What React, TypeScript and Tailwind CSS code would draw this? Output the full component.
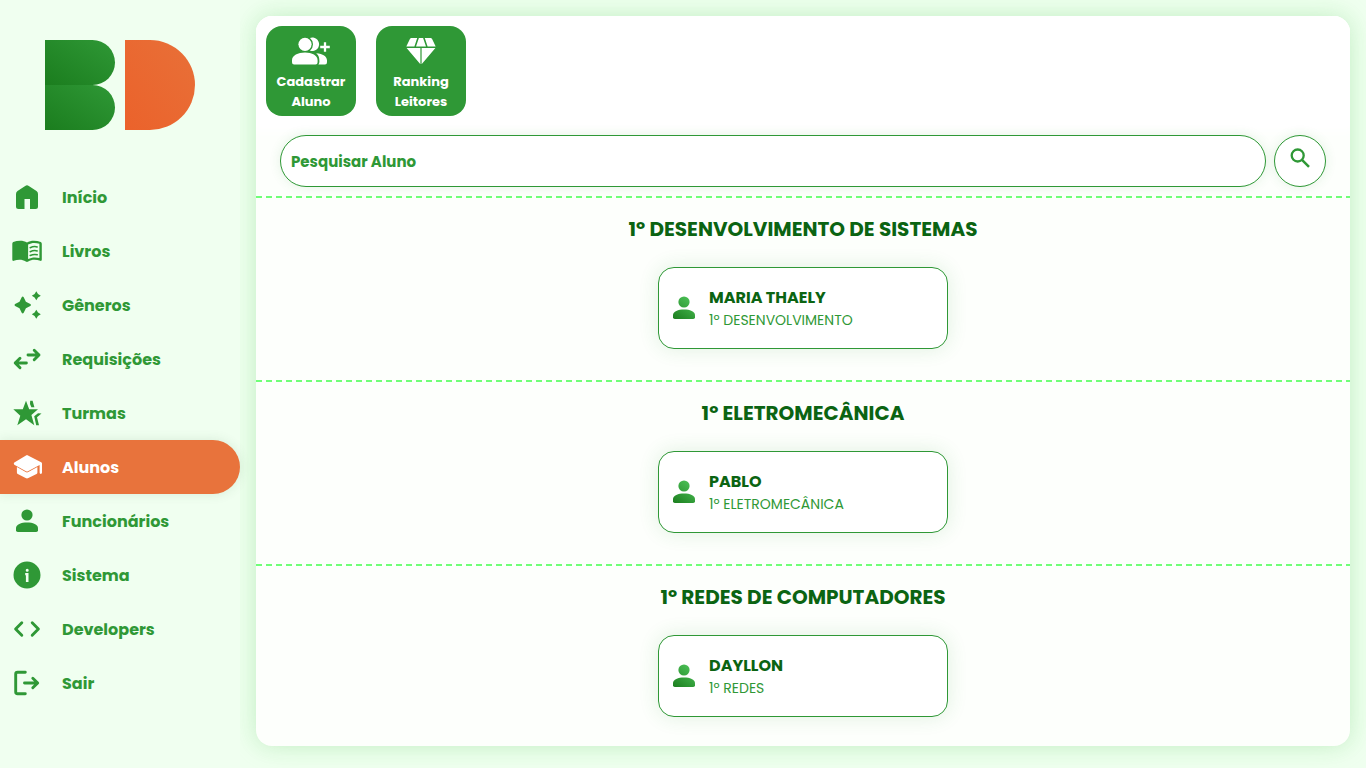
import type { ReactNode } from "react";

const Svg = ({ children, className = "size-[30px]", box = "0 0 30 30" }: { children: ReactNode; className?: string; box?: string }) => (
  <svg viewBox={box} className={"shrink-0 " + className} fill="currentColor" aria-hidden="true">
    {children}
  </svg>
);

const line = { fill: "none", stroke: "currentColor", strokeWidth: 2.9, strokeLinecap: "round", strokeLinejoin: "round" } as const;

const HomeIcon = () => (
  <Svg>
    <path d="M13.2 3.9Q15 2.7 16.8 3.9L24.5 9.1Q26 10.2 26 12V24.5Q26 27 23.5 27H18V17H12.5V27H6.5Q4 27 4 24.5V12Q4 10.2 5.5 9.1Z" />
  </Svg>
);

const BookIcon = () => (
  <Svg>
    <path
      fillRule="evenodd"
      d="M15 6.4C11.5 4.2 5.8 4.2 1.2 6Q.3 6.5 .3 7.8V23.6Q.3 25.3 1.7 24.8C6 23.4 10.5 23.4 13.8 25.5Q15 26.3 16.2 25.5C19.5 23.4 24 23.4 28.3 24.8Q29.8 25.3 29.8 23.6V7.8Q29.8 6.5 28.8 6C24.2 4.2 18.5 4.2 15 6.4ZM16.1 8.6C19.4 6.6 23.6 6.5 27.4 7.8V22C23.6 21 19.5 21.2 16.1 23Z"
    />
    <path d="M18.2 11.7Q21.8 10 25.2 10.9M18.2 15.7Q21.8 14 25.2 14.9M18.2 19.5Q21.8 17.8 25.2 18.7" {...line} strokeWidth={1.5} />
  </Svg>
);

const SparklesIcon = () => (
  <Svg>
    <path d="M9.7 7.3Q10.7 5.7 11.7 7.3L13.9 11.7L18.3 13.9Q19.8 15 18.3 16.1L13.9 18.3L11.7 22.7Q10.7 24.3 9.7 22.7L7.5 18.3L3.1 16.1Q1.6 15 3.1 13.9L7.5 11.7Z" />
    <path d="M24.3 1.2L26 4L28.8 5.7L26 7.4L24.3 10.2L22.6 7.4L19.8 5.7L22.6 4ZM24.3 19.8L26 22.6L28.8 24.3L26 26L24.3 28.8L22.6 26L19.8 24.3L22.6 22.6Z" />
  </Svg>
);

const SwapIcon = () => (
  <Svg>
    <path d="M16 11H27M22.2 6.2L27 11L22.2 15.8M14.4 19H3.2M8 14.2L3.2 19L8 23.8" {...line} />
  </Svg>
);

const StarIcon = () => (
  <Svg>
    <path d="M14 2.7L17.2 11.3H26L19.4 17L22.3 27.3L14 21.3L5.3 27.3L8.3 17.7L1.3 11.3H10.8Z" />
    <path d="M18.2 2.7H20.6L22.4 9.3H19.4L18 6ZM29.5 15.4L25 19.2L27 27.3H24.2L22.2 18.3L26 15.2Z" />
  </Svg>
);

const CapIcon = () => (
  <Svg>
    <path d="M14 3.4Q15 2.8 16 3.4L29.2 10.2Q30 10.7 30 11.6V20.6Q30 22 28.8 22T27.6 20.6V13L16 19.2Q15 19.7 14 19.2L2.3 12.7Q1.2 11.6 2.3 10.5Z" />
    <path d="M4.9 15.1L13.7 20.1Q15 20.8 16.3 20.1L25.4 15.1V20.4Q25.4 21.4 24.5 22L16.4 26.1Q15 26.7 13.6 26.1L5.8 22Q4.9 21.4 4.9 20.4Z" />
  </Svg>
);

const PersonShape = () => (
  <>
    <circle cx="15" cy="9" r="5.6" />
    <path d="M4 22.3C4 18.5 9.2 16.6 15 16.6S26 18.5 26 22.3V24.2Q26 26 24.2 26H5.8Q4 26 4 24.2Z" />
  </>
);

const InfoIcon = () => (
  <Svg>
    <path fillRule="evenodd" d="M15 1.5A13.5 13.5 0 1 1 15 28.5A13.5 13.5 0 0 1 15 1.5ZM15.2 8.7A1.5 1.5 0 1 0 15.2 11.7A1.5 1.5 0 0 0 15.2 8.7ZM13.2 13V15.2H13.9V22H16.5V13Z" />
  </Svg>
);

const CodeIcon = () => (
  <Svg>
    <path d="M9.8 8.8L3.6 15L9.8 21.2M20.2 8.8L26.4 15L20.2 21.2" {...line} />
  </Svg>
);

const ExitIcon = () => (
  <Svg>
    <path d="M13.3 4.3H5.5Q3.7 4.3 3.7 6V24Q3.7 25.7 5.5 25.7H13.3M12.5 15H25.5M20.8 10.2L25.7 15L20.8 19.8" {...line} />
  </Svg>
);

const AddPeopleIcon = () => (
  <Svg className="h-[30px] w-10" box="0 0 40 30">
    <circle cx="14" cy="8.3" r="6.6" />
    <path d="M1 24.3C1 19.5 7 16.6 14 16.6S26.6 19.5 26.6 24.3V26.2Q26.6 28.5 24.5 28.5H3.1Q1 28.5 1 26.2ZM19 1.9A6.8 6.8 0 1 1 19 14.7Q22 12.2 22 8.3T19 1.9ZM25.2 17.3C32 18 36 20.4 36 24.5V26.2Q36 28.5 34 28.5H27.4Q28.4 27.4 28.4 25.8C28.4 21.8 28 19.8 25.2 17.3Z" />
    <path d="M34 6.3V15.7M29.2 11H38.8" {...line} strokeLinecap="butt" strokeWidth={2.3} />
  </Svg>
);

const DiamondIcon = () => (
  <Svg>
    <path d="M5.5 2H11.2L8.4 10.5H.3L3.9 3Q4.4 2 5.5 2ZM12.9 2H17.1L20 10.5H10ZM18.8 2H24.5Q25.6 2 26.1 3L29.7 10.5H21.6ZM.6 12H14.4V28.3ZM15.6 12H29.4L15.6 28.3Z" />
  </Svg>
);

const menu = [
  { label: "Início", icon: <HomeIcon /> },
  { label: "Livros", icon: <BookIcon /> },
  { label: "Gêneros", icon: <SparklesIcon /> },
  { label: "Requisições", icon: <SwapIcon /> },
  { label: "Turmas", icon: <StarIcon /> },
  { label: "Alunos", icon: <CapIcon />, active: true },
  { label: "Funcionários", icon: <Svg><PersonShape /></Svg> },
  { label: "Sistema", icon: <InfoIcon /> },
  { label: "Developers", icon: <CodeIcon /> },
  { label: "Sair", icon: <ExitIcon /> },
];

const classes = [
  { title: "1º DESENVOLVIMENTO DE SISTEMAS", student: "MARIA THAELY", course: "1º DESENVOLVIMENTO" },
  { title: "1º ELETROMECÂNICA", student: "PABLO", course: "1º ELETROMECÂNICA" },
  { title: "1º REDES DE COMPUTADORES", student: "DAYLLON", course: "1º REDES" },
];

const Logo = () => (
  <svg viewBox="0 0 150 90" className="h-[90px] w-[150px]" role="img" aria-label="BD">
    <defs>
      <linearGradient id="logo-green" x1="0" y1="1" x2="1" y2="0">
        <stop stopColor="#1b7d1e" />
        <stop offset="1" stopColor="#2f9836" />
      </linearGradient>
      <linearGradient id="logo-orange" x1="0" y1="1" x2="1" y2="0">
        <stop stopColor="#eb622b" />
        <stop offset="1" stopColor="#e87038" />
      </linearGradient>
    </defs>
    <path d="M0 0H47.5A22.5 22.5 0 0 1 47.5 45H0Z" fill="url(#logo-green)" />
    <path d="M0 45H47.5A22.5 22.5 0 0 1 47.5 90H0Z" fill="url(#logo-green)" />
    <path d="M80 0H105A45 45 0 0 1 105 90H80Z" fill="url(#logo-orange)" />
  </svg>
);

const ActionButton = ({ icon, top, bottom }: { icon: ReactNode; top: string; bottom: string }) => (
  <button type="button" className="flex size-[90px] flex-col items-center rounded-2xl bg-[#2f9836] pt-2.5 text-[13px] leading-5 font-bold text-white">
    {icon}
    <span className="mt-1.5">{top}</span>
    <span>{bottom}</span>
  </button>
);

export default function App() {
  return (
    <div className="flex min-h-screen bg-[#f0fff0] font-['Poppins','Inter',sans-serif] text-[#2f9836]">
      <aside className="w-60 shrink-0">
        <a href="#inicio" className="flex justify-center pt-10 pb-10">
          <Logo />
        </a>
        <nav>
          {menu.map(({ label, icon, active }) => (
            <a
              key={label}
              href="#menu"
              aria-current={active ? "page" : undefined}
              className={
                "flex h-[54px] items-center gap-5 rounded-r-full pl-3 text-base leading-6 font-bold " +
                (active ? "bg-[#e8733c] text-white shadow-[0_0_12px_rgba(47,100,54,0.12)]" : "")
              }
            >
              {icon}
              <span className="pt-0.5">{label}</span>
            </a>
          ))}
        </nav>
      </aside>

      <div className="flex min-w-0 flex-1 overflow-hidden pt-4 pr-4 pb-[22px] pl-4">
        <main className="flex min-w-0 flex-1 flex-col overflow-hidden rounded-2xl bg-[#fdfffc] shadow-[0_0_20px_rgba(47,152,54,0.16),0_0_40px_rgba(170,255,170,0.25)]">
          <header>
            <div className="flex gap-5 bg-white p-2.5 shadow-[0_0_12px_6px_#fff]">
              <ActionButton icon={<AddPeopleIcon />} top="Cadastrar" bottom="Aluno" />
              <ActionButton icon={<DiamondIcon />} top="Ranking" bottom="Leitores" />
            </div>
            <form className="flex gap-2 px-6 pt-[9px] pb-[9px]" onSubmit={(event) => event.preventDefault()}>
              <input
                type="search"
                aria-label="Pesquisar Aluno"
                placeholder="Pesquisar Aluno"
                className="h-[52px] min-w-0 flex-1 rounded-full border border-[#2f9836] bg-white px-2.5 text-[15px] font-bold shadow-[0_0_12px_rgba(47,152,54,0.12)] outline-none placeholder:text-[#2f9836] placeholder:opacity-100"
              />
              <button
                type="submit"
                aria-label="Pesquisar"
                className="flex size-[52px] items-start justify-center rounded-full border border-[#2f9836] bg-white pt-2.5 shadow-[0_0_12px_rgba(47,152,54,0.12)]"
              >
                <Svg className="size-6" box="0 0 24 24">
                  <circle cx="9.7" cy="9.5" r="6" {...line} strokeWidth={2.3} />
                  <path d="M14 13.8L21 20.8" {...line} strokeWidth={2.5} strokeLinecap="butt" />
                </Svg>
              </button>
            </form>
          </header>

          {classes.map(({ title, student, course }) => (
            <section key={title} className="flex flex-col items-center pb-[31px] last:pb-7">
              <svg className="h-0.5 w-full" aria-hidden="true">
                <line x1="0" y1="1" x2="100%" y2="1" stroke="#70ff78" strokeWidth="2" strokeDasharray="6 4" />
              </svg>
              <h2 className="pt-4 text-[20px] leading-[30px] font-bold text-[#0b6412]">{title}</h2>
              <article className="mt-[23px] flex h-[82px] w-[290px] items-center gap-2.5 rounded-2xl border border-[#2f9836] bg-white pl-2.5 shadow-[0_0_20px_rgba(47,152,54,0.14)]">
                <svg viewBox="0 0 30 30" className="size-[30px] shrink-0" fill="url(#person-green)" aria-hidden="true">
                  <defs>
                    <linearGradient id="person-green" gradientUnits="userSpaceOnUse" x1="5" y1="27" x2="21" y2="4">
                      <stop stopColor="#1b7d1e" />
                      <stop offset="1" stopColor="#4cc157" />
                    </linearGradient>
                  </defs>
                  <PersonShape />
                </svg>
                <div>
                  <h3 className="text-base leading-6 font-bold text-[#0b6412]">{student}</h3>
                  <p className="text-sm leading-5 font-normal">{course}</p>
                </div>
              </article>
            </section>
          ))}
        </main>
      </div>
    </div>
  );
}
